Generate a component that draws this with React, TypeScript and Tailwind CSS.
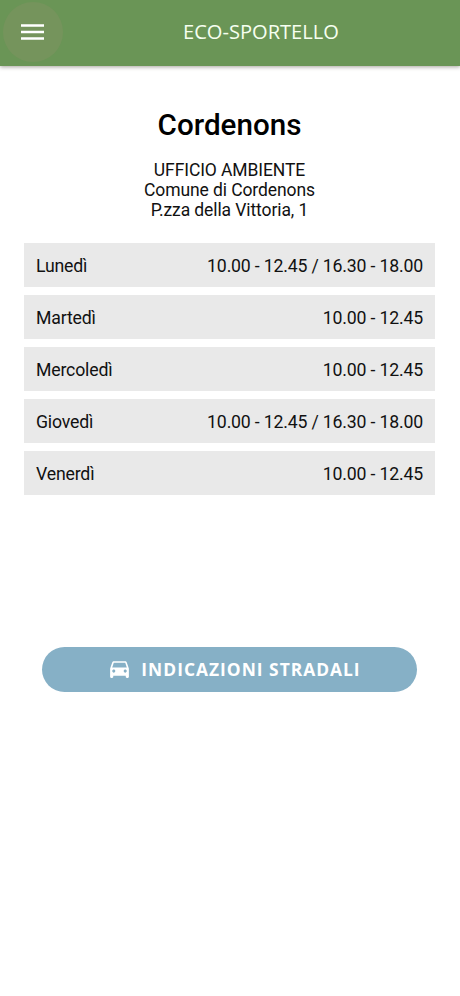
import React from "react";

const days = [
  { day: "Lunedì", hours: "10.00 - 12.45 / 16.30 - 18.00" },
  { day: "Martedì", hours: "10.00 - 12.45" },
  { day: "Mercoledì", hours: "10.00 - 12.45" },
  { day: "Giovedì", hours: "10.00 - 12.45 / 16.30 - 18.00" },
  { day: "Venerdì", hours: "10.00 - 12.45" },
];

export default function App() {
  return (
    <div className="flex h-[996px] w-[460px] flex-col bg-white font-['Roboto',sans-serif] text-[#111]">
      <header className="flex h-[66px] shrink-0 items-center bg-[#6a9556] pb-[3px] shadow-[0_1px_4px_rgba(60,50,40,0.45)]">
        <button className="ml-[3px] flex size-[60px] items-center justify-center rounded-full bg-[#75945c] pr-px">
          <svg viewBox="0 0 23 16" className="h-4 w-[23px] fill-white">
            <path d="M0 0.3h23v2.5H0zM0 6.8h23v2.5H0zM0 13.2h23v2.5H0z" />
          </svg>
        </button>
        <h1 className="ml-[120px] pt-[2px] font-['Open_Sans',sans-serif] text-[20.1px] whitespace-nowrap text-[#f6fff0]">ECO-SPORTELLO</h1>
      </header>
      <main className="flex flex-col">
        <h2 className="mt-[41px] mr-px text-center text-[29.6px] leading-9 font-medium text-black">Cordenons</h2>
        <address className="mt-[17px] mr-px text-center text-[17.5px] leading-5 tracking-[-0.1px] not-italic">
          UFFICIO AMBIENTE
          <br />
          Comune di Cordenons
          <br />
          P.zza della Vittoria, 1
        </address>
        <ul className="mr-[25px] ml-6 mt-[23px] flex flex-col gap-2">
          {days.map((d) => (
            <li key={d.day} className="flex h-11 items-center justify-between bg-[#e9e9e9] px-3 pt-px text-[17.7px] leading-6 tracking-[-0.18px]">
              <span>{d.day}</span>
              <span>{d.hours}</span>
            </li>
          ))}
        </ul>
        <button className="mt-[152px] ml-[42px] flex h-[45px] w-[375px] items-center justify-center gap-[9px] rounded-full bg-[#86b0c6] pl-[9px] font-['Open_Sans',sans-serif] text-[17.4px] font-bold tracking-[1px] text-white">
          <svg viewBox="0 0 24 24" className="mb-[2px] size-[25px] fill-white">
            <path d="M18.92 6.01C18.72 5.42 18.16 5 17.5 5h-11c-.66 0-1.21.42-1.42 1.01L3 12v8c0 .55.45 1 1 1h1c.55 0 1-.45 1-1v-1h12v1c0 .55.45 1 1 1h1c.55 0 1-.45 1-1v-8l-2.08-5.99zM6.5 16c-.83 0-1.5-.67-1.5-1.5S5.67 13 6.5 13s1.5.67 1.5 1.5S7.33 16 6.5 16zm11 0c-.83 0-1.5-.67-1.5-1.5s.67-1.5 1.5-1.5 1.5.67 1.5 1.5-.67 1.5-1.5 1.5zM5 11l1.5-4.5h11L19 11H5z" />
          </svg>
          <span>INDICAZIONI STRADALI</span>
        </button>
      </main>
    </div>
  );
}
